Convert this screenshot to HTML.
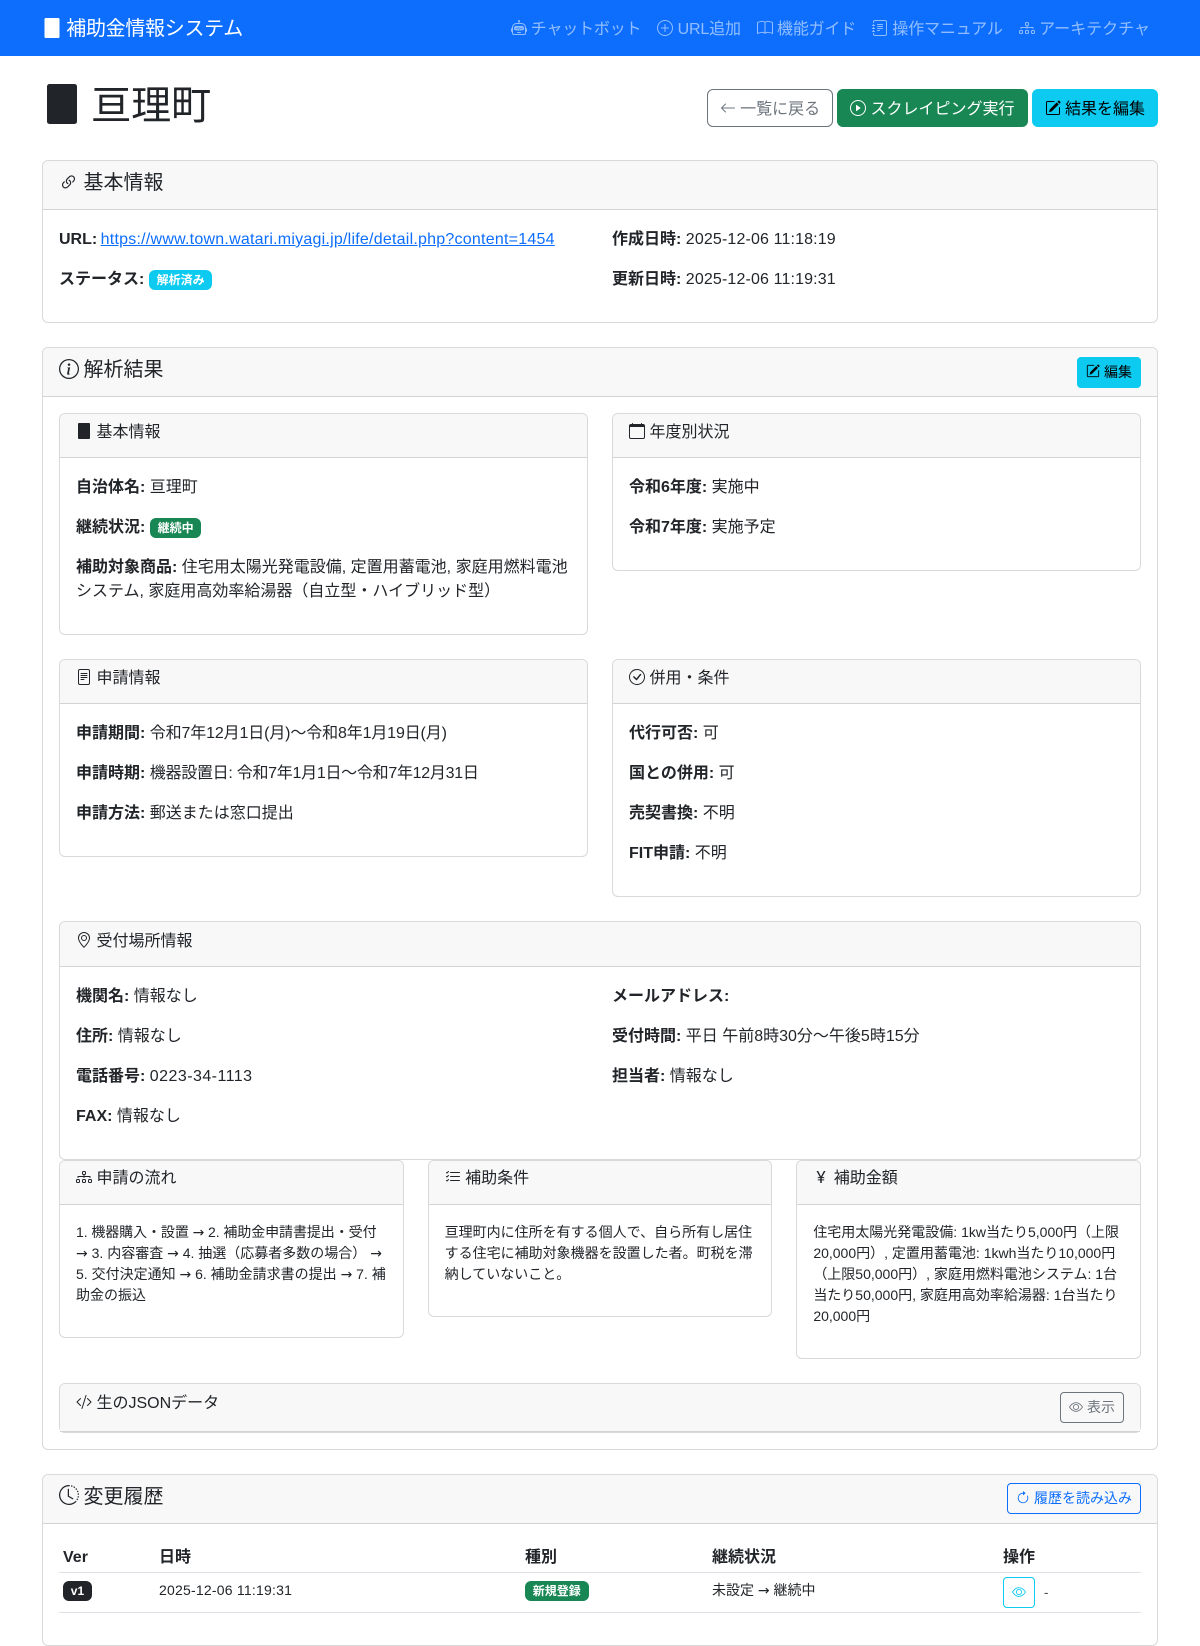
<!DOCTYPE html>
<html lang="ja"><head><meta charset="utf-8"><title>亘理町</title>
<style>
*{box-sizing:border-box}
html,body{margin:0;padding:0}
body{width:1200px;height:1646px;overflow:hidden;background:#fff;color:#212529;font:400 16px/1.5 "Liberation Sans","Noto Sans CJK JP",sans-serif}
svg.bi{width:1em;height:1em;vertical-align:-.125em;fill:currentColor;display:inline-block;overflow:visible}
nav{height:56px;background:#0d6efd;display:flex;align-items:center;justify-content:space-between;padding:0 42px}
.brand{font-size:20px;color:#fff;line-height:30px;white-space:nowrap;position:relative;top:1px;letter-spacing:-.3px;word-spacing:-1px}
.links{display:flex;position:relative;top:2px}
.links a{color:rgba(255,255,255,.55);padding:8px;white-space:nowrap;letter-spacing:-.18px}
.links a:last-child{letter-spacing:0}
.wrap{width:1116px;margin:24px 42px 0}
.top{display:flex;justify-content:space-between;align-items:center;margin-bottom:24px}
h1{font-size:40px;font-weight:400;line-height:1.2;margin:0 0 8px;position:relative;top:2px;word-spacing:-2px}
h5{font-size:20px;font-weight:400;line-height:1.2;margin:0 0 8px;position:relative;top:2px;word-spacing:-1px}
h6{font-size:16px;font-weight:400;line-height:1.2;margin:0 0 8px;position:relative;top:1px}
.c4 h6{top:0}
p{margin:0 0 16px;position:relative;top:2px}
b{font-weight:700}
.btn{display:inline-block;font-size:16px;line-height:24px;padding:8px 12px 4px;border:1px solid transparent;border-radius:6px;white-space:nowrap}
.btn.sm{font-size:14px;line-height:21px;padding:4px 8px;border-radius:4px}
.bs{margin-left:4px}
.o2{color:#6c757d;border-color:#6c757d}
.s{background:#198754;border-color:#198754;color:#fff}
.i{background:#0dcaf0;border-color:#0dcaf0;color:#000}
.o1{color:#0d6efd;border-color:#0d6efd}
.o3{color:#0dcaf0;border-color:#0dcaf0}
.card{border:1px solid rgba(0,0,0,.15);border-radius:6px;background:#fff;margin-bottom:24px}
.hd{padding:8px 16px;background:#f8f8f8;border-bottom:1px solid rgba(0,0,0,.15);border-radius:5px 5px 0 0}
.fx{display:flex;justify-content:space-between;align-items:center}
.bd{padding:16px}
.row{display:flex;margin:0 -12px;align-items:flex-start}
.c6{width:50%;padding:0 12px;flex:none}
.c4{width:33.3333%;padding:0 12px;flex:none}
.c6 .c,.c4 .c{margin-bottom:24px}
.badge{display:inline-block;font-size:12px;font-weight:700;line-height:1;padding:4.2px 7.8px;border-radius:6px;color:#fff;vertical-align:baseline;white-space:nowrap}
.bi1{background:#0dcaf0}.bs1{background:#198754}.bd1{background:#212529}
p.small{font-size:14px;line-height:21px;white-space:nowrap;top:1px}
a.u{color:#0d6efd;text-decoration:underline;letter-spacing:.23px}
.a{font-family:"DejaVu Sans",sans-serif;font-style:normal;line-height:0}
table{border-collapse:collapse;table-layout:fixed;width:1082px;margin-bottom:16px}
th{font-weight:700;text-align:left;padding:4px;height:33px;border-bottom:1px solid #dee2e6;line-height:24px}
th span{position:relative;top:2px}
td{padding:4px;font-size:14px;line-height:21px;border-bottom:1px solid #dee2e6;vertical-align:middle;white-space:nowrap}
.up{position:relative;top:-2px;display:inline-block}
</style></head><body>
<svg width="0" height="0" style="position:absolute">
<symbol id="bld" viewBox="0 0 16 16"><path d="M3 0a1 1 0 0 0-1 1v14a1 1 0 0 0 1 1h10a1 1 0 0 0 1-1V1a1 1 0 0 0-1-1H3z"/></symbol>
<symbol id="robot" viewBox="0 0 16 16"><path d="M6 12.5a.5.5 0 0 1 .5-.5h3a.5.5 0 0 1 0 1h-3a.5.5 0 0 1-.5-.5ZM3 8.062C3 6.76 4.235 5.765 5.53 5.886a26.58 26.58 0 0 0 4.94 0C11.765 5.765 13 6.76 13 8.062v1.157a.933.933 0 0 1-.765.935c-.845.147-2.34.346-4.235.346-1.895 0-3.39-.2-4.235-.346A.933.933 0 0 1 3 9.219V8.062Zm4.542-.827a.25.25 0 0 0-.217.068l-.92.9a24.767 24.767 0 0 1-1.871-.183.25.25 0 0 0-.068.495c.55.076 1.232.149 2.02.193a.25.25 0 0 0 .189-.071l.754-.736.847 1.71a.25.25 0 0 0 .404.062l.932-.97a25.286 25.286 0 0 0 1.922-.188.25.25 0 0 0-.068-.495c-.538.074-1.207.145-1.98.189a.25.25 0 0 0-.166.076l-.754.785-.842-1.7a.25.25 0 0 0-.182-.135Z"/><path d="M8.5 1.866a1 1 0 1 0-1 0V3h-2A4.5 4.5 0 0 0 1 7.5V8a1 1 0 0 0-1 1v2a1 1 0 0 0 1 1v1a2 2 0 0 0 2 2h10a2 2 0 0 0 2-2v-1a1 1 0 0 0 1-1V9a1 1 0 0 0-1-1v-.5A4.5 4.5 0 0 0 10.5 3h-2V1.866ZM14 7.5V13a1 1 0 0 1-1 1H3a1 1 0 0 1-1-1V7.5A3.5 3.5 0 0 1 5.5 4h5A3.5 3.5 0 0 1 14 7.5Z"/></symbol>
<symbol id="plus" viewBox="0 0 16 16"><path d="M8 15A7 7 0 1 1 8 1a7 7 0 0 1 0 14zm0 1A8 8 0 1 0 8 0a8 8 0 0 0 0 16z"/><path d="M8 4a.5.5 0 0 1 .5.5v3h3a.5.5 0 0 1 0 1h-3v3a.5.5 0 0 1-1 0v-3h-3a.5.5 0 0 1 0-1h3v-3A.5.5 0 0 1 8 4z"/></symbol>
<symbol id="book" viewBox="0 0 16 16"><path d="M1 2.828c.885-.37 2.154-.769 3.388-.893 1.33-.134 2.458.063 3.112.752v9.746c-.935-.53-2.12-.603-3.213-.493-1.18.12-2.37.461-3.287.811V2.828zm7.5-.141c.654-.689 1.782-.886 3.112-.752 1.234.124 2.503.523 3.388.893v9.923c-.918-.35-2.107-.692-3.287-.81-1.094-.111-2.278-.039-3.213.492V2.687zM8 1.783C7.015.936 5.587.81 4.287.94c-1.514.153-3.042.672-3.994 1.105A.5.5 0 0 0 0 2.5v11a.5.5 0 0 0 .707.455c.882-.4 2.303-.881 3.68-1.02 1.409-.142 2.59.087 3.223.877a.5.5 0 0 0 .78 0c.633-.79 1.814-1.019 3.222-.877 1.378.139 2.8.62 3.681 1.02A.5.5 0 0 0 16 13.5v-11a.5.5 0 0 0-.293-.455c-.952-.433-2.48-.952-3.994-1.105C10.413.809 8.985.936 8 1.783z"/></symbol>
<symbol id="journal" viewBox="0 0 16 16"><path d="M5 10.5a.5.5 0 0 1 .5-.5h2a.5.5 0 0 1 0 1h-2a.5.5 0 0 1-.5-.5zm0-2a.5.5 0 0 1 .5-.5h5a.5.5 0 0 1 0 1h-5a.5.5 0 0 1-.5-.5zm0-2a.5.5 0 0 1 .5-.5h5a.5.5 0 0 1 0 1h-5a.5.5 0 0 1-.5-.5zm0-2a.5.5 0 0 1 .5-.5h5a.5.5 0 0 1 0 1h-5a.5.5 0 0 1-.5-.5z"/><path d="M3 0h10a2 2 0 0 1 2 2v12a2 2 0 0 1-2 2H3a2 2 0 0 1-2-2v-1h1v1a1 1 0 0 0 1 1h10a1 1 0 0 0 1-1V2a1 1 0 0 0-1-1H3a1 1 0 0 0-1 1v1H1V2a2 2 0 0 1 2-2z"/><path d="M1 5v-.5a.5.5 0 0 1 1 0V5h.5a.5.5 0 0 1 0 1h-2a.5.5 0 0 1 0-1H1zm0 3v-.5a.5.5 0 0 1 1 0V8h.5a.5.5 0 0 1 0 1h-2a.5.5 0 0 1 0-1H1zm0 3v-.5a.5.5 0 0 1 1 0v.5h.5a.5.5 0 0 1 0 1h-2a.5.5 0 0 1 0-1H1z"/></symbol>
<symbol id="diagram" viewBox="0 0 16 16"><path fill-rule="evenodd" d="M6 3.5A1.5 1.5 0 0 1 7.5 2h1A1.5 1.5 0 0 1 10 3.5v1A1.5 1.5 0 0 1 8.5 6v1H14a.5.5 0 0 1 .5.5v1a.5.5 0 0 1-1 0V8h-5v.5a.5.5 0 0 1-1 0V8h-5v.5a.5.5 0 0 1-1 0v-1A.5.5 0 0 1 2 7h5.5V6A1.5 1.5 0 0 1 6 4.5v-1zM8.5 5a.5.5 0 0 0 .5-.5v-1a.5.5 0 0 0-.5-.5h-1a.5.5 0 0 0-.5.5v1a.5.5 0 0 0 .5.5h1zM0 11.5A1.5 1.5 0 0 1 1.5 10h1A1.5 1.5 0 0 1 4 11.5v1A1.5 1.5 0 0 1 2.5 14h-1A1.5 1.5 0 0 1 0 12.5v-1zm1.5-.5a.5.5 0 0 0-.5.5v1a.5.5 0 0 0 .5.5h1a.5.5 0 0 0 .5-.5v-1a.5.5 0 0 0-.5-.5h-1zm4.5.5A1.5 1.5 0 0 1 7.5 10h1a1.5 1.5 0 0 1 1.5 1.5v1A1.5 1.5 0 0 1 8.5 14h-1A1.5 1.5 0 0 1 6 12.5v-1zm1.5-.5a.5.5 0 0 0-.5.5v1a.5.5 0 0 0 .5.5h1a.5.5 0 0 0 .5-.5v-1a.5.5 0 0 0-.5-.5h-1zm4.5.5a1.5 1.5 0 0 1 1.5-1.5h1a1.5 1.5 0 0 1 1.5 1.5v1a1.5 1.5 0 0 1-1.5 1.5h-1a1.5 1.5 0 0 1-1.5-1.5v-1zm1.5-.5a.5.5 0 0 0-.5.5v1a.5.5 0 0 0 .5.5h1a.5.5 0 0 0 .5-.5v-1a.5.5 0 0 0-.5-.5h-1z"/></symbol>
<symbol id="arrow" viewBox="0 0 16 16"><path fill-rule="evenodd" d="M15 8a.5.5 0 0 0-.5-.5H2.707l3.147-3.146a.5.5 0 1 0-.708-.708l-4 4a.5.5 0 0 0 0 .708l4 4a.5.5 0 0 0 .708-.708L2.707 8.5H14.5A.5.5 0 0 0 15 8z"/></symbol>
<symbol id="play" viewBox="0 0 16 16"><path d="M8 15A7 7 0 1 1 8 1a7 7 0 0 1 0 14zm0 1A8 8 0 1 0 8 0a8 8 0 0 0 0 16z"/><path d="M6.271 5.055a.5.5 0 0 1 .52.038l3.5 2.5a.5.5 0 0 1 0 .814l-3.5 2.5A.5.5 0 0 1 6 10.5v-5a.5.5 0 0 1 .271-.445z"/></symbol>
<symbol id="pencil" viewBox="0 0 16 16"><path d="M15.502 1.94a.5.5 0 0 1 0 .706L14.459 3.69l-2-2L13.502.646a.5.5 0 0 1 .707 0l1.293 1.293zm-1.75 2.456-2-2L4.939 9.21a.5.5 0 0 0-.121.196l-.805 2.414a.25.25 0 0 0 .316.316l2.414-.805a.5.5 0 0 0 .196-.12l6.813-6.814z"/><path fill-rule="evenodd" d="M1 13.5A1.5 1.5 0 0 0 2.5 15h11a1.5 1.5 0 0 0 1.5-1.5v-6a.5.5 0 0 0-1 0v6a.5.5 0 0 1-.5.5h-11a.5.5 0 0 1-.5-.5v-11a.5.5 0 0 1 .5-.5H9a.5.5 0 0 0 0-1H2.5A1.5 1.5 0 0 0 1 2.5v11z"/></symbol>
<symbol id="link" viewBox="0 0 16 16"><path d="M4.715 6.542 3.343 7.914a3 3 0 1 0 4.243 4.243l1.828-1.829A3 3 0 0 0 8.586 5.5L8 6.086a1.002 1.002 0 0 0-.154.199 2 2 0 0 1 .861 3.337L6.88 11.45a2 2 0 1 1-2.83-2.83l.793-.792a4.018 4.018 0 0 1-.128-1.287z"/><path d="M6.586 4.672A3 3 0 0 0 7.414 9.5l.775-.776a2 2 0 0 1-.896-3.346L9.12 3.55a2 2 0 1 1 2.83 2.83l-.793.792c.112.42.155.855.128 1.287l1.372-1.372a3 3 0 1 0-4.243-4.243L6.586 4.672z"/></symbol>
<symbol id="info" viewBox="0 0 16 16"><path d="M8 15A7 7 0 1 1 8 1a7 7 0 0 1 0 14zm0 1A8 8 0 1 0 8 0a8 8 0 0 0 0 16z"/><path d="m8.93 6.588-2.29.287-.082.38.45.083c.294.07.352.176.288.469l-.738 3.468c-.194.897.105 1.319.808 1.319.545 0 1.178-.252 1.465-.598l.088-.416c-.2.176-.492.246-.686.246-.275 0-.375-.193-.304-.533L8.93 6.588zM9 4.5a1 1 0 1 1-2 0 1 1 0 0 1 2 0z"/></symbol>
<symbol id="cal" viewBox="0 0 16 16"><path d="M3.5 0a.5.5 0 0 1 .5.5V1h8V.5a.5.5 0 0 1 1 0V1h1a2 2 0 0 1 2 2v11a2 2 0 0 1-2 2H2a2 2 0 0 1-2-2V3a2 2 0 0 1 2-2h1V.5a.5.5 0 0 1 .5-.5zM1 4v10a1 1 0 0 0 1 1h12a1 1 0 0 0 1-1V4H1z"/></symbol>
<symbol id="file" viewBox="0 0 16 16"><path d="M5 4a.5.5 0 0 0 0 1h6a.5.5 0 0 0 0-1H5zm-.5 2.5A.5.5 0 0 1 5 6h6a.5.5 0 0 1 0 1H5a.5.5 0 0 1-.5-.5zM5 8a.5.5 0 0 0 0 1h6a.5.5 0 0 0 0-1H5zm0 2a.5.5 0 0 0 0 1h3a.5.5 0 0 0 0-1H5z"/><path d="M2 2a2 2 0 0 1 2-2h8a2 2 0 0 1 2 2v12a2 2 0 0 1-2 2H4a2 2 0 0 1-2-2V2zm10-1H4a1 1 0 0 0-1 1v12a1 1 0 0 0 1 1h8a1 1 0 0 0 1-1V2a1 1 0 0 0-1-1z"/></symbol>
<symbol id="check" viewBox="0 0 16 16"><path d="M8 15A7 7 0 1 1 8 1a7 7 0 0 1 0 14zm0 1A8 8 0 1 0 8 0a8 8 0 0 0 0 16z"/><path d="M10.97 4.97a.235.235 0 0 0-.02.022L7.477 9.417 5.384 7.323a.75.75 0 0 0-1.06 1.06L6.97 11.03a.75.75 0 0 0 1.079-.02l3.992-4.99a.75.75 0 0 0-1.071-1.05z"/></symbol>
<symbol id="geo" viewBox="0 0 16 16"><path d="M12.166 8.94c-.524 1.062-1.234 2.12-1.96 3.07A31.493 31.493 0 0 1 8 14.58a31.481 31.481 0 0 1-2.206-2.57c-.726-.95-1.436-2.008-1.96-3.07C3.304 7.867 3 6.862 3 6a5 5 0 0 1 10 0c0 .862-.305 1.867-.834 2.94zM8 16s6-5.686 6-10A6 6 0 0 0 2 6c0 4.314 6 10 6 10z"/><path d="M8 8a2 2 0 1 1 0-4 2 2 0 0 1 0 4zm0 1a3 3 0 1 0 0-6 3 3 0 0 0 0 6z"/></symbol>
<symbol id="list" viewBox="0 0 16 16"><path fill-rule="evenodd" d="M5 11.5a.5.5 0 0 1 .5-.5h9a.5.5 0 0 1 0 1h-9a.5.5 0 0 1-.5-.5zm0-4a.5.5 0 0 1 .5-.5h9a.5.5 0 0 1 0 1h-9a.5.5 0 0 1-.5-.5zm0-4a.5.5 0 0 1 .5-.5h9a.5.5 0 0 1 0 1h-9a.5.5 0 0 1-.5-.5zM3.854 2.146a.5.5 0 0 1 0 .708l-1.5 1.5a.5.5 0 0 1-.708 0l-.5-.5a.5.5 0 1 1 .708-.708L2 3.293l1.146-1.147a.5.5 0 0 1 .708 0zm0 4a.5.5 0 0 1 0 .708l-1.5 1.5a.5.5 0 0 1-.708 0l-.5-.5a.5.5 0 1 1 .708-.708L2 7.293l1.146-1.147a.5.5 0 0 1 .708 0zm0 4a.5.5 0 0 1 0 .708l-1.5 1.5a.5.5 0 0 1-.708 0l-.5-.5a.5.5 0 0 1 .708-.708l.146.147 1.146-1.147a.5.5 0 0 1 .708 0z"/></symbol>
<symbol id="yen" viewBox="0 0 16 16"><path d="M8.75 14v-2.629h2.446v-.967H8.75v-1.31h2.445v-.967H9.128L12.5 2h-1.699L8.047 7.327h-.086L5.207 2H3.5l3.363 6.127H4.778v.968H7.25v1.31H4.78v.966h2.47V14h1.502z"/></symbol>
<symbol id="code" viewBox="0 0 16 16"><path d="M10.478 1.647a.5.5 0 1 0-.956-.294l-4 13a.5.5 0 0 0 .956.294l4-13zM4.854 4.146a.5.5 0 0 1 0 .708L1.707 8l3.147 3.146a.5.5 0 0 1-.708.708l-3.5-3.5a.5.5 0 0 1 0-.708l3.5-3.5a.5.5 0 0 1 .708 0zm6.292 0a.5.5 0 0 0 0 .708L14.293 8l-3.147 3.146a.5.5 0 0 0 .708.708l3.5-3.5a.5.5 0 0 0 0-.708l-3.5-3.5a.5.5 0 0 0-.708 0z"/></symbol>
<symbol id="eye" viewBox="0 0 16 16"><path d="M16 8s-3-5.5-8-5.5S0 8 0 8s3 5.5 8 5.5S16 8 16 8zM1.173 8a13.133 13.133 0 0 1 1.66-2.043C4.12 4.668 5.88 3.5 8 3.5c2.12 0 3.879 1.168 5.168 2.457A13.133 13.133 0 0 1 14.828 8c-.058.087-.122.183-.195.288-.335.48-.83 1.12-1.465 1.755C11.879 11.332 10.119 12.5 8 12.5c-2.12 0-3.879-1.168-5.168-2.457A13.134 13.134 0 0 1 1.172 8z"/><path d="M8 5.5a2.5 2.5 0 1 0 0 5 2.5 2.5 0 0 0 0-5zM4.5 8a3.5 3.5 0 1 1 7 0 3.5 3.5 0 0 1-7 0z"/></symbol>
<symbol id="clock" viewBox="0 0 16 16"><path d="M8.515 1.019A7 7 0 0 0 8 1V0a8 8 0 0 1 .589.022l-.074.997zm2.004.45a7.003 7.003 0 0 0-.985-.299l.219-.976c.383.086.76.2 1.126.342l-.36.933zm1.37.71a7.01 7.01 0 0 0-.439-.27l.493-.87a8.025 8.025 0 0 1 .979.654l-.615.789a6.996 6.996 0 0 0-.418-.302zm1.834 1.79a6.99 6.99 0 0 0-.653-.796l.724-.69c.27.285.52.59.747.91l-.818.576zm.744 1.352a7.08 7.08 0 0 0-.214-.468l.893-.45a7.976 7.976 0 0 1 .45 1.088l-.95.313a7.023 7.023 0 0 0-.179-.483zm.53 2.507a6.991 6.991 0 0 0-.1-1.025l.985-.17c.067.386.106.778.116 1.17l-1 .025zm-.131 1.538c.033-.17.06-.339.081-.51l.993.123a7.957 7.957 0 0 1-.23 1.155l-.964-.267c.046-.165.086-.332.12-.501zm-.952 2.379c.184-.29.346-.594.486-.908l.914.405c-.16.36-.345.706-.555 1.038l-.845-.535zm-.964 1.205c.122-.122.239-.248.35-.378l.758.653a8.073 8.073 0 0 1-.401.432l-.707-.707z"/><path d="M8 1a7 7 0 1 0 4.95 11.95l.707.707A8.001 8.001 0 1 1 8 0v1z"/><path d="M7.5 3a.5.5 0 0 1 .5.5v5.21l3.248 1.856a.5.5 0 0 1-.496.868l-3.5-2A.5.5 0 0 1 7 9V3.5a.5.5 0 0 1 .5-.5z"/></symbol>
<symbol id="reload" viewBox="0 0 16 16"><path fill-rule="evenodd" d="M8 3a5 5 0 1 0 4.546 2.914.5.5 0 0 1 .908-.417A6 6 0 1 1 8 2v1z"/><path d="M8 4.466V.534a.25.25 0 0 1 .41-.192l2.36 1.966c.12.1.12.284 0 .384L8.41 4.658A.25.25 0 0 1 8 4.466z"/></symbol>
</svg>

<nav>
<div class="brand"><svg class="bi"><use href="#bld"/></svg> 補助金情報システム</div>
<div class="links">
<a><svg class="bi"><use href="#robot"/></svg> チャットボット</a>
<a><svg class="bi"><use href="#plus"/></svg> URL追加</a>
<a><svg class="bi"><use href="#book"/></svg> 機能ガイド</a>
<a><svg class="bi"><use href="#journal"/></svg> 操作マニュアル</a>
<a><svg class="bi"><use href="#diagram"/></svg> アーキテクチャ</a>
</div>
</nav>

<div class="wrap">
<div class="top">
<h1><svg class="bi"><use href="#bld"/></svg> 亘理町</h1>
<div style="display:flex">
<a class="btn o2"><svg class="bi"><use href="#arrow"/></svg> 一覧に戻る</a>
<a class="btn s bs"><svg class="bi"><use href="#play"/></svg> スクレイピング実行</a>
<a class="btn i bs"><svg class="bi"><use href="#pencil"/></svg> 結果を編集</a>
</div>
</div>

<div class="card">
<div class="hd"><h5><svg class="bi" style="width:19px;height:19px;vertical-align:-2.5px;margin-right:1px"><use href="#link"/></svg> 基本情報</h5></div>
<div class="bd"><div class="row">
<div class="c6"><p><b>URL:</b> <a class="u" style="margin-left:-1px">https://www.town.watari.miyagi.jp/life/detail.php?content=1454</a></p>
<p><b>ステータス:</b> <span class="badge bi1">解析済み</span></p></div>
<div class="c6"><p><b>作成日時:</b> <span style="letter-spacing:.14px">2025-12-06 11:18:19</span></p><p><b>更新日時:</b> <span style="letter-spacing:.14px">2025-12-06 11:19:31</span></p></div>
</div></div>
</div>

<div class="card">
<div class="hd fx"><h5><svg class="bi"><use href="#info"/></svg> 解析結果</h5><a class="btn sm i"><svg class="bi"><use href="#pencil"/></svg> 編集</a></div>
<div class="bd" style="padding-bottom:16px">
<div class="row">
<div class="c6"><div class="card c"><div class="hd"><h6><svg class="bi"><use href="#bld"/></svg> 基本情報</h6></div><div class="bd">
<p><b>自治体名:</b> 亘理町</p>
<p><b>継続状況:</b> <span class="badge bs1">継続中</span></p>
<p><b>補助対象商品:</b> 住宅用太陽光発電設備, 定置用蓄電池, 家庭用燃料電池<br>システム, 家庭用高効率給湯器（自立型・ハイブリッド型）</p>
</div></div></div>
<div class="c6"><div class="card c"><div class="hd"><h6><svg class="bi"><use href="#cal"/></svg> 年度別状況</h6></div><div class="bd">
<p><b>令和6年度:</b> 実施中</p><p><b>令和7年度:</b> 実施予定</p>
</div></div></div>
</div>
<div class="row">
<div class="c6"><div class="card c"><div class="hd"><h6><svg class="bi"><use href="#file"/></svg> 申請情報</h6></div><div class="bd">
<p><b>申請期間:</b> <span style="letter-spacing:-.14px">令和7年12月1日(月)〜令和8年1月19日(月)</span></p>
<p><b>申請時期:</b> <span style="letter-spacing:-.28px">機器設置日: 令和7年1月1日〜令和7年12月31日</span></p>
<p><b>申請方法:</b> 郵送または窓口提出</p>
</div></div></div>
<div class="c6"><div class="card c"><div class="hd"><h6><svg class="bi"><use href="#check"/></svg> 併用・条件</h6></div><div class="bd">
<p><b>代行可否:</b> 可</p><p><b>国との併用:</b> 可</p><p><b>売契書換:</b> 不明</p><p><b>FIT申請:</b> 不明</p>
</div></div></div>
</div>
<div class="card" style="margin-bottom:0"><div class="hd"><h6 style="top:2px"><svg class="bi"><use href="#geo"/></svg> 受付場所情報</h6></div><div class="bd"><div class="row">
<div class="c6"><p><b>機関名:</b> 情報なし</p><p><b>住所:</b> 情報なし</p><p><b>電話番号:</b> <span style="letter-spacing:.45px">0223-34-1113</span></p><p><b>FAX:</b> 情報なし</p></div>
<div class="c6"><p><b>メールアドレス:</b></p><p><b>受付時間:</b> 平日 午前8時30分〜午後5時15分</p><p><b>担当者:</b> 情報なし</p></div>
</div></div></div>
<div class="row">
<div class="c4"><div class="card c"><div class="hd"><h6><svg class="bi"><use href="#diagram"/></svg> 申請の流れ</h6></div><div class="bd"><p class="small"><span style="letter-spacing:-.08px">1. 機器購入・設置 <i class="a">→</i> 2. 補助金申請書提出・受付</span><br><i class="a">→</i> 3. 内容審査 <i class="a">→</i> 4. 抽選（応募者多数の場合） <i class="a">→</i><br>5. 交付決定通知 <i class="a">→</i> 6. 補助金請求書の提出 <i class="a">→</i> 7. 補<br>助金の振込</p></div></div></div>
<div class="c4"><div class="card c"><div class="hd"><h6><svg class="bi"><use href="#list"/></svg> 補助条件</h6></div><div class="bd"><p class="small">亘理町内に住所を有する個人で、自ら所有し居住<br>する住宅に補助対象機器を設置した者。町税を滞<br>納していないこと。</p></div></div></div>
<div class="c4"><div class="card c"><div class="hd"><h6><svg class="bi"><use href="#yen"/></svg> 補助金額</h6></div><div class="bd"><p class="small">住宅用太陽光発電設備: 1kw当たり5,000円（上限<br>20,000円）, 定置用蓄電池: 1kwh当たり10,000円<br>（上限50,000円）, 家庭用燃料電池システム: 1台<br>当たり50,000円, 家庭用高効率給湯器: 1台当たり<br>20,000円</p></div></div></div>
</div>
<div class="card" style="margin-bottom:0"><div class="hd fx"><h6 style="top:0"><svg class="bi"><use href="#code"/></svg> 生のJSONデータ</h6><a class="btn sm o2"><svg class="bi"><use href="#eye"/></svg> 表示</a></div></div>
</div>
</div>

<div class="card" style="margin-bottom:0">
<div class="hd fx"><h5><svg class="bi"><use href="#clock"/></svg> 変更履歴</h5><a class="btn sm o1"><svg class="bi"><use href="#reload"/></svg> 履歴を読み込み</a></div>
<div class="bd">
<table style="margin-bottom:16px">
<colgroup><col style="width:96px"><col style="width:366px"><col style="width:187px"><col style="width:291px"><col style="width:142px"></colgroup>
<tr><th><span>Ver</span></th><th><span>日時</span></th><th><span>種別</span></th><th><span>継続状況</span></th><th><span>操作</span></th></tr>
<tr><td><span class="up"><span class="badge bd1">v1</span></span></td><td><span class="up" style="letter-spacing:.22px">2025-12-06 11:19:31</span></td><td><span class="up"><span class="badge bs1">新規登録</span></span></td><td><span class="up">未設定 <i class="a">→</i> 継続中</span></td><td><a class="btn sm o3"><svg class="bi"><use href="#eye"/></svg></a> <span style="margin-left:5px;color:#555">-</span></td></tr>
</table>
</div>
</div>
</div>
</body></html>
